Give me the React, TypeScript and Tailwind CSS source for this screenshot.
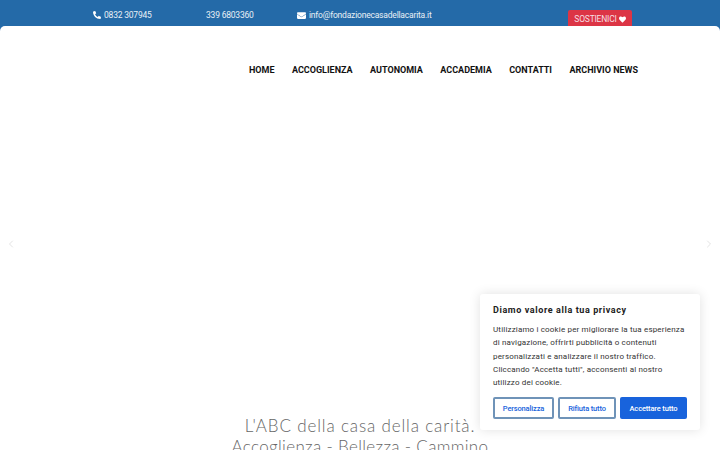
import { ChevronLeft, ChevronRight } from "lucide-react";
import { FaPhoneAlt, FaEnvelope, FaHeart } from "react-icons/fa";

const NAV = ["HOME", "ACCOGLIENZA", "AUTONOMIA", "ACCADEMIA", "CONTATTI", "ARCHIVIO NEWS"];

function CookieCard() {
  return (
    <div className="absolute right-5 bottom-5 w-[220px] h-[136px] bg-white rounded-[3px] shadow-[0_0_12px_rgba(0,0,0,0.12)] pl-[13px] pr-[13px] pt-[10px] font-['Roboto',sans-serif]">
      <h2 className="text-[9px] leading-[13px] font-bold tracking-[0.6px] text-[#212121]">Diamo valore alla tua privacy</h2>
      <p className="mt-[6px] text-[8px] leading-[13.25px] tracking-[0.17px] text-[#333333] whitespace-nowrap">
        Utilizziamo i cookie per migliorare la tua esperienza
        <br />
        di navigazione, offrirti pubblicità o contenuti
        <br />
        personalizzati e analizzare il nostro traffico.
        <br />
        Cliccando "Accetta tutti", acconsenti al nostro
        <br />
        utilizzo dei cookie.
      </p>
      <div className="mt-[8px] flex gap-1">
        <button className="w-[61px] h-[22px] border-2 border-[#6f93b8] rounded-[2px] text-[7.5px] tracking-[-0.15px] font-medium text-[#1863dc]">Personalizza</button>
        <button className="w-[58px] h-[22px] border-2 border-[#6f93b8] rounded-[2px] text-[7.5px] tracking-[-0.15px] font-medium text-[#1863dc]">Rifiuta tutto</button>
        <button className="w-[67px] h-[22px] bg-[#1863dc] rounded-[2px] text-[7.5px] tracking-[-0.15px] font-medium text-white">Accettare tutto</button>
      </div>
    </div>
  );
}

export default function App() {
  return (
    <div className="relative w-[720px] h-[450px] overflow-hidden bg-[#246aa8] font-['Roboto',sans-serif]">
      {/* top bar */}
      <div className="h-[26px] flex text-[8.5px] tracking-[-0.2px] text-[#e9f0f6] relative">
        <div className="pl-[93px] w-[206px] flex items-center gap-[3px] h-[30px]">
          <FaPhoneAlt className="w-[8px] h-[8px] text-white" />
          <span>0832 307945</span>
        </div>
        <div className="w-[91px] flex items-center h-[30px]">339 6803360</div>
        <div className="flex items-center gap-[3px] h-[30px]">
          <FaEnvelope className="w-[9px] h-[9px] text-white" />
          <span>info@fondazionecasadellacarita.it</span>
        </div>
        <div className="absolute left-[568px] top-[10px] w-[64px] h-[16px] bg-[#dc3545] rounded-t-[2px] flex items-center justify-center gap-[2px] pt-[2px] text-[#f6dfe2]">
          <span>SOSTIENICI</span>
          <FaHeart className="w-[7px] h-[7px] text-white" />
        </div>
      </div>

      {/* page */}
      <div className="h-[424px] bg-white rounded-t-[5px] flex flex-col">
        <nav className="mt-[37px] pl-[249px] flex gap-[17.5px] text-[9px] leading-[14px] font-bold text-[#111111] whitespace-nowrap">
          {NAV.map((n) => (
            <a key={n}>{n}</a>
          ))}
        </nav>
        <div className="mt-[338px] flex flex-col items-center text-[17px] leading-[21px] font-light text-[#666666] font-['Lato',sans-serif] whitespace-nowrap">
          <div className="tracking-[0.85px]">L'ABC della casa della carità.</div>
          <div className="tracking-[0.33px]">Accoglienza - Bellezza - Cammino</div>
        </div>
      </div>

      <ChevronLeft className="absolute left-[5px] top-[238px] w-[12px] h-[12px] text-[#e4e4e4]" />
      <ChevronRight className="absolute right-[5px] top-[238px] w-[12px] h-[12px] text-[#e4e4e4]" />
      <CookieCard />
    </div>
  );
}
